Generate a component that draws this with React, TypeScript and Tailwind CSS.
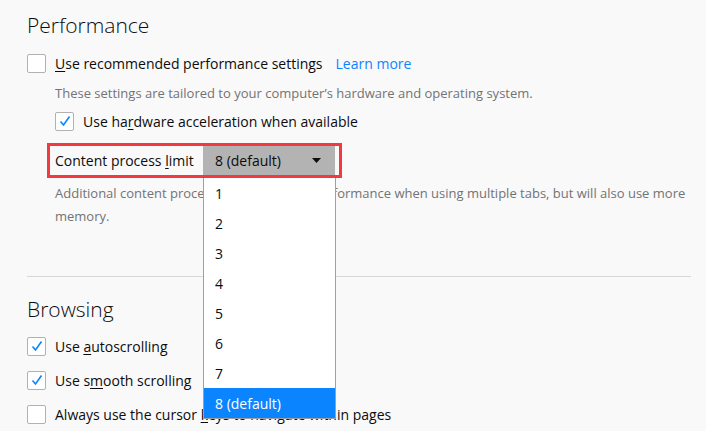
import React from 'react';

const Check = ({ checked }: { checked?: boolean }) => (
  <span className="w-[19px] h-[19px] shrink-0 border border-[#b1b1b3] bg-white rounded-[2px] flex items-center justify-center">
    {checked && (
      <svg width="14" height="14" viewBox="0 0 14 14">
        <path d="M2.5 7.5 L5.5 11 L11.5 2.5" fill="none" stroke="#0a84ff" strokeWidth="1.6" />
      </svg>
    )}
  </span>
);

const U = ({ children }: { children: React.ReactNode }) => <span className="underline underline-offset-2">{children}</span>;

const options = ['1', '2', '3', '4', '5', '6', '7', '8 (default)'];

export default function App() {
  return (
    <div
      className="w-[706px] h-[431px] overflow-hidden bg-[#f9f9fa] text-[#0c0c0d] pl-[27px] relative"
      style={{ fontFamily: '"Open Sans", "Noto Sans", sans-serif' }}
    >
      <h1 className="text-[21px] font-light h-[30px] mt-[10px] leading-[30px]">Performance</h1>
      <div className="flex items-center gap-[9px] h-[30px] mt-[8px] text-[14px]">
        <Check />
        <span><U>U</U>se recommended performance settings</span>
        <span className="text-[#0a84ff] ml-[4px]">Learn more</span>
      </div>
      <p className="pl-[28px] text-[13px] text-[#737373] h-[26px] leading-[26px] mt-[2px] whitespace-nowrap">
        These settings are tailored to your computer’s hardware and operating system.
      </p>
      <div className="pl-[28px] flex items-center gap-[9px] h-[30px] text-[14px]">
        <Check checked />
        <span>Use ha<U>r</U>dware acceleration when available</span>
      </div>
      <div className="ml-[20px] mt-[7px] w-[295px] h-[35px] border-[3px] border-[#f2393f] flex items-center text-[14px]">
        <span className="pl-[5px] w-[153px] shrink-0 whitespace-nowrap">Content process <U>l</U>imit</span>
        <div className="relative h-full flex-1 bg-[#b3b3b3] flex items-center pl-[12px] mr-[4px]">
          <span>8 (default)</span>
          <svg className="absolute right-[14px] top-[12px]" width="9" height="5" viewBox="0 0 9 5">
            <path d="M0 0 H9 L4.5 5 Z" fill="#0c0c0d" />
          </svg>
          <div className="absolute left-0 top-[calc(100%+3px)] w-[133px] bg-white border border-[#a0a0a0] border-t-0 z-10">
            {options.map((o, i) => (
              <div
                key={o}
                className={`h-[30px] flex items-center pl-[11px] ${i === options.length - 1 ? 'bg-[#0a84ff] text-white' : ''}`}
              >
                {o}
              </div>
            ))}
          </div>
        </div>
      </div>
      <p className="pl-[28px] pr-[14px] text-[13px] text-[#737373] leading-[23px] mt-[4px]">
        Additional content processes can improve performance when using multiple tabs, but will also use more memory.
      </p>
      <div className="mr-[15px] mt-[48px] border-t border-[#d7d7db]" />
      <h1 className="text-[21px] font-light h-[30px] mt-[17px] leading-[30px]">Browsing</h1>
      <div className="flex items-center gap-[9px] h-[34px] mt-[5px] text-[14px]">
        <Check checked />
        <span>Use <U>a</U>utoscrolling</span>
      </div>
      <div className="flex items-center gap-[9px] h-[34px] text-[14px]">
        <Check checked />
        <span>Use s<U>m</U>ooth scrolling</span>
      </div>
      <div className="flex items-center gap-[9px] h-[34px] text-[14px]">
        <Check />
        <span>Always use the cursor <U>k</U>eys to navigate within pages</span>
      </div>
    </div>
  );
}
